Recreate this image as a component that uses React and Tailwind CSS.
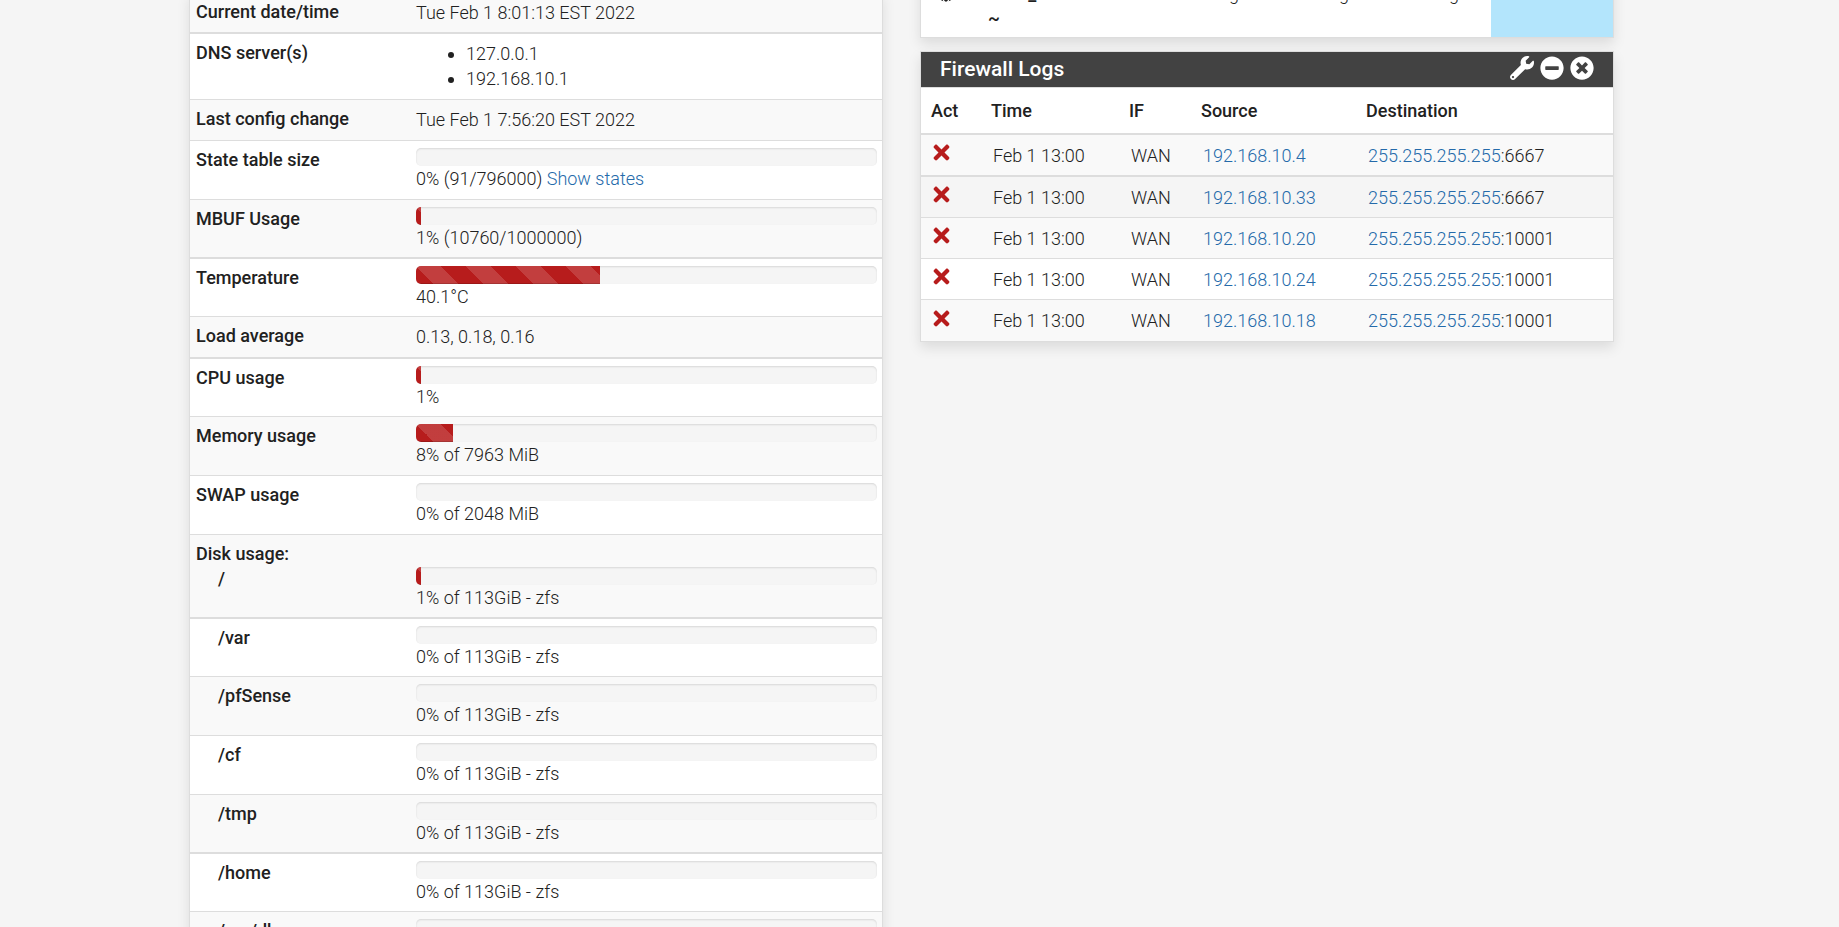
import { FaWrench, FaMinusCircle, FaTimesCircle, FaTimes, FaGlobe } from "react-icons/fa";

const STRIPES = "bg-[linear-gradient(45deg,rgba(255,255,255,0.15)_25%,transparent_25%,transparent_50%,rgba(255,255,255,0.15)_50%,rgba(255,255,255,0.15)_75%,transparent_75%,transparent)] bg-[length:50px_50px]";

function Meter({ label, value }) {
  return (
    <div role="meter" aria-label={label} aria-valuenow={value} aria-valuemin={0} aria-valuemax={100} className="h-[18px] overflow-hidden rounded-[5px] bg-[#f5f5f5] shadow-[inset_0_1px_2px_rgba(0,0,0,0.12)]">
      <div className={"h-full bg-[#b71c1c] shadow-[inset_0_-1px_0_rgba(0,0,0,0.15)] " + STRIPES} style={{ width: value + "%" }} />
    </div>
  );
}

const rows = [
  { label: "Current date/time", text: "Tue Feb 1 8:01:13 EST 2022", size: "h-[41px] border-b-2" },
  { label: "DNS server(s)", list: ["127.0.0.1", "192.168.10.1"], size: "h-[66px] border-b" },
  { label: "Last config change", text: "Tue Feb 1 7:56:20 EST 2022", size: "h-[41px] border-b" },
  { label: "State table size", value: 0, text: "0% (91/796000)", link: "Show states", size: "h-[59px] border-b" },
  { label: "MBUF Usage", value: 1, text: "1% (10760/1000000)", size: "h-[59px] border-b-2" },
  { label: "Temperature", value: 40, text: "40.1°C", size: "h-[58px] border-b" },
  { label: "Load average", text: "0.13, 0.18, 0.16", size: "h-[42px] border-b-2" },
  { label: "CPU usage", value: 1, text: "1%", size: "h-[58px] border-b" },
  { label: "Memory usage", value: 8, text: "8% of 7963 MiB", size: "h-[59px] border-b" },
  { label: "SWAP usage", value: 0, text: "0% of 2048 MiB", size: "h-[59px] border-b" },
  { heading: "Disk usage:", label: "/", disk: true, value: 1, text: "1% of 113GiB - zfs", size: "h-[84px] border-b-2" },
  { label: "/var", disk: true, value: 0, text: "0% of 113GiB - zfs", size: "h-[58px] border-b" },
  { label: "/pfSense", disk: true, value: 0, text: "0% of 113GiB - zfs", size: "h-[59px] border-b" },
  { label: "/cf", disk: true, value: 0, text: "0% of 113GiB - zfs", size: "h-[59px] border-b" },
  { label: "/tmp", disk: true, value: 0, text: "0% of 113GiB - zfs", size: "h-[59px] border-b-2" },
  { label: "/home", disk: true, value: 0, text: "0% of 113GiB - zfs", size: "h-[58px] border-b" },
  { label: "/var/db", disk: true, value: 0, text: "0% of 113GiB - zfs", size: "h-[59px] border-b" },
];

const logs = [
  { source: "192.168.10.4", port: "6667", style: "h-[42px] bg-[#f9f9f9] border-b-2" },
  { source: "192.168.10.33", port: "6667", style: "h-[41px] bg-[#f5f5f5] border-b" },
  { source: "192.168.10.20", port: "10001", style: "h-[41px] bg-[#f9f9f9] border-b" },
  { source: "192.168.10.24", port: "10001", style: "h-[41px] bg-white border-b" },
  { source: "192.168.10.18", port: "10001", style: "h-[41px] bg-[#f9f9f9]" },
];

const PANEL = "border border-[#ddd] bg-white shadow-[0_6px_12px_rgba(0,0,0,0.1)]";
const LINK = "text-[#246aaa]";

function SystemInformation() {
  return (
    <section className={"-mt-[8px] " + PANEL}>
      <table className="w-full table-fixed border-separate border-spacing-0">
        <colgroup>
          <col className="w-[220px]" />
          <col />
        </colgroup>
        <tbody>
          {rows.map((row, i) => {
            const cell = row.size + " border-[#ddd] p-0 align-top ";
            return (
              <tr key={row.label} className={i % 2 ? "bg-white" : "bg-[#f9f9f9]"}>
                <th scope="row" className={cell + "pt-[6px] pl-[6px] text-left font-medium"}>
                  {row.heading && <div>{row.heading}</div>}
                  <div className={row.disk ? "pl-[22px]" : ""}>{row.label}</div>
                </th>
                <td className={cell + "pt-[7px] pl-[6px] pr-[5px]"}>
                  {row.heading && <div className="h-[25px]" />}
                  {row.value !== undefined && <Meter label={row.label} value={row.value} />}
                  {row.list ? (
                    <ul className="list-disc pl-[50px]">
                      {row.list.map((ip) => <li key={ip}>{ip}</li>)}
                    </ul>
                  ) : (
                    <div>
                      {row.text}
                      {row.link && <> <a href="#states" className={LINK}>{row.link}</a></>}
                    </div>
                  )}
                </td>
              </tr>
            );
          })}
        </tbody>
      </table>
    </section>
  );
}

function Gateways() {
  return (
    <section className={"-mt-[19px] flex h-[57px] justify-between border-t-0 " + PANEL}>
      <div className="grid grow grid-cols-[51px_187px_110px_110px_1fr] pl-[16px]">
        <FaGlobe className="mt-[3px] text-[18px]" aria-label="Default gateway" />
        <div className="font-medium">
          <div>WAN_DHCP</div>
          <div>~</div>
        </div>
        <div>Pending</div>
        <div>Pending</div>
        <div>Pending</div>
      </div>
      <div className="w-[122px] bg-[#b3e5fc]" />
    </section>
  );
}

function FirewallLogs() {
  return (
    <section className={PANEL}>
      <header className="flex h-[36px] items-center justify-between border-b border-[#ddd] bg-[#424242] px-[19px] text-white">
        <h2 className="text-[21px] font-medium">Firewall Logs</h2>
        <div className="flex gap-[6px] pb-[3px] text-[24px]">
          <button type="button" aria-label="Settings"><FaWrench /></button>
          <button type="button" aria-label="Collapse"><FaMinusCircle /></button>
          <button type="button" aria-label="Close"><FaTimesCircle /></button>
        </div>
      </header>
      <table className="w-full table-fixed border-separate border-spacing-0 text-left">
        <colgroup>
          <col className="w-[60px]" />
          <col className="w-[138px]" />
          <col className="w-[72px]" />
          <col className="w-[165px]" />
          <col />
        </colgroup>
        <thead>
          <tr>
            {["Act", "Time", "IF", "Source", "Destination"].map((name) => (
              <th key={name} scope="col" className="h-[47px] border-b-2 border-[#ddd] pl-[10px] font-medium">{name}</th>
            ))}
          </tr>
        </thead>
        <tbody>
          {logs.map((log) => {
            const cell = "border-[#ddd] " + log.style;
            return (
              <tr key={log.source}>
                <td className={cell + " pl-[9px]"}><FaTimes className="mb-[5px] text-[23px] text-[#b71c1c]" aria-label="Block" /></td>
                <td className={cell + " pl-[12px]"}>Feb 1 13:00</td>
                <td className={cell + " pl-[12px]"}>WAN</td>
                <td className={cell + " pl-[12px]"}><a href="#source" className={LINK}>{log.source}</a></td>
                <td className={cell + " pl-[12px]"}><a href="#destination" className={LINK}>255.255.255.255</a>:{log.port}</td>
              </tr>
            );
          })}
        </tbody>
      </table>
    </section>
  );
}

export default function App() {
  return (
    <main className="h-screen overflow-hidden bg-[#f5f5f5] pr-[36px] font-[Roboto,sans-serif] text-[18px] leading-[25px] font-light text-[#212121]">
      <div className="mx-auto grid max-w-[1425px] grid-cols-2 items-start gap-[37px]">
        <SystemInformation />
        <div className="flex flex-col gap-[13px]">
          <Gateways />
          <FirewallLogs />
        </div>
      </div>
    </main>
  );
}
